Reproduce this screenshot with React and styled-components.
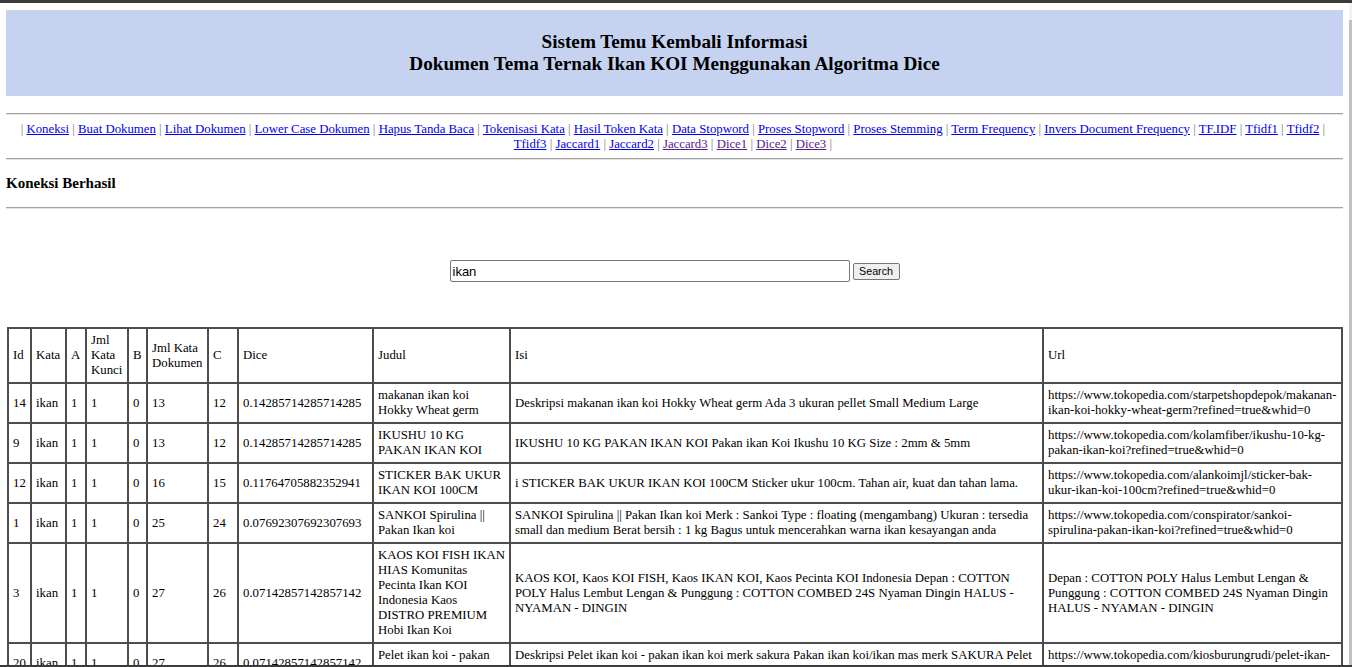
import React, { useState } from 'react';
import styled, { createGlobalStyle } from 'styled-components';

const GlobalStyle = createGlobalStyle`
    html,
    body {
        margin: 0;
        padding: 0;
        background: #ffffff;
    }
    body {
        font-family: 'Liberation Serif', 'Times New Roman', serif;
        font-size: 12.8px;
        color: #000000;
    }
`;

const menu = [
    { label: 'Koneksi' },
    { label: 'Buat Dokumen' },
    { label: 'Lihat Dokumen' },
    { label: 'Lower Case Dokumen' },
    { label: 'Hapus Tanda Baca' },
    { label: 'Tokenisasi Kata' },
    { label: 'Hasil Token Kata' },
    { label: 'Data Stopword' },
    { label: 'Proses Stopword' },
    { label: 'Proses Stemming' },
    { label: 'Term Frequency' },
    { label: 'Invers Document Frequency' },
    { label: 'TF.IDF' },
    { label: 'Tfidf1' },
    { label: 'Tfidf2', breakAfter: true },
    { label: 'Tfidf3' },
    { label: 'Jaccard1' },
    { label: 'Jaccard2' },
    { label: 'Jaccard3', visited: true },
    { label: 'Dice1', visited: true },
    { label: 'Dice2', visited: true },
    { label: 'Dice3', visited: true },
];

const headers = [
    'Id',
    'Kata',
    'A',
    'Jml Kata Kunci',
    'B',
    'Jml Kata Dokumen',
    'C',
    'Dice',
    'Judul',
    'Isi',
    'Url',
];

// column widths measured off the reference, border to border
const colWidths = [23, 35, 20, 42, 19, 61, 30, 135, 137, 533, 299];

const results = [
    {
        id: 14,
        kata: 'ikan',
        a: 1,
        jkk: 1,
        b: 0,
        jkd: 13,
        c: 12,
        dice: '0.14285714285714285',
        judul: 'makanan ikan koi Hokky Wheat germ',
        isi: 'Deskripsi makanan ikan koi Hokky Wheat germ Ada 3 ukuran pellet Small Medium Large',
        url: 'https://www.tokopedia.com/starpetshopdepok/makanan-ikan-koi-hokky-wheat-germ?refined=true&whid=0',
    },
    {
        id: 9,
        kata: 'ikan',
        a: 1,
        jkk: 1,
        b: 0,
        jkd: 13,
        c: 12,
        dice: '0.14285714285714285',
        judul: 'IKUSHU 10 KG PAKAN IKAN KOI',
        isi: 'IKUSHU 10 KG PAKAN IKAN KOI Pakan ikan Koi Ikushu 10 KG Size : 2mm & 5mm',
        url: 'https://www.tokopedia.com/kolamfiber/ikushu-10-kg-pakan-ikan-koi?refined=true&whid=0',
    },
    {
        id: 12,
        kata: 'ikan',
        a: 1,
        jkk: 1,
        b: 0,
        jkd: 16,
        c: 15,
        dice: '0.11764705882352941',
        judul: 'STICKER BAK UKUR IKAN KOI 100CM',
        isi: 'i STICKER BAK UKUR IKAN KOI 100CM Sticker ukur 100cm. Tahan air, kuat dan tahan lama.',
        url: 'https://www.tokopedia.com/alankoimjl/sticker-bak-ukur-ikan-koi-100cm?refined=true&whid=0',
    },
    {
        id: 1,
        kata: 'ikan',
        a: 1,
        jkk: 1,
        b: 0,
        jkd: 25,
        c: 24,
        dice: '0.07692307692307693',
        judul: 'SANKOI Spirulina || Pakan Ikan koi',
        isi: 'SANKOI Spirulina || Pakan Ikan koi Merk : Sankoi Type : floating (mengambang) Ukuran : tersedia small dan medium Berat bersih : 1 kg Bagus untuk mencerahkan warna ikan kesayangan anda',
        url: 'https://www.tokopedia.com/conspirator/sankoi-spirulina-pakan-ikan-koi?refined=true&whid=0',
    },
    {
        id: 3,
        kata: 'ikan',
        a: 1,
        jkk: 1,
        b: 0,
        jkd: 27,
        c: 26,
        dice: '0.07142857142857142',
        judul: 'KAOS KOI FISH IKAN HIAS Komunitas Pecinta Ikan KOI Indonesia Kaos DISTRO PREMIUM Hobi Ikan Koi',
        isi: 'KAOS KOI, Kaos KOI FISH, Kaos IKAN KOI, Kaos Pecinta KOI Indonesia Depan : COTTON POLY Halus Lembut Lengan & Punggung : COTTON COMBED 24S Nyaman Dingin HALUS - NYAMAN - DINGIN',
        url: 'Depan : COTTON POLY Halus Lembut Lengan & Punggung : COTTON COMBED 24S Nyaman Dingin HALUS - NYAMAN - DINGIN',
    },
    {
        id: 20,
        kata: 'ikan',
        a: 1,
        jkk: 1,
        b: 0,
        jkd: 27,
        c: 26,
        dice: '0.07142857142857142',
        judul: 'Pelet ikan koi - pakan ikan koi',
        isi: 'Deskripsi Pelet ikan koi - pakan ikan koi merk sakura Pakan ikan koi/ikan mas merk SAKURA Pelet apung isi 1 kg',
        url: 'https://www.tokopedia.com/kiosburungrudi/pelet-ikan-koi-pakan-ikan-koi?refined=true&whid=0',
    },
];

function App() {
    const [keyword, setKeyword] = useState('ikan');

    return (
        <>
            <GlobalStyle />
            <Frame>
                <WindowEdge />
                <Viewport>
                    <Page>
                        <Banner>
                            <BannerTitle>
                                Sistem Temu Kembali Informasi
                                <br />
                                Dokumen Tema Ternak Ikan KOI Menggunakan Algoritma Dice
                            </BannerTitle>
                        </Banner>

                        <Rule $top={17} />
                        <Menu>
                            <Sep>| </Sep>
                            {menu.map((m) => (
                                <React.Fragment key={m.label}>
                                    <MenuLink href='#' $visited={m.visited}>
                                        {m.label}
                                    </MenuLink>
                                    <Sep> | </Sep>
                                    {m.breakAfter && <br />}
                                </React.Fragment>
                            ))}
                        </Menu>
                        <Rule $top={6} />

                        <Status>Koneksi Berhasil</Status>
                        <Rule $top={15} />

                        <SearchForm onSubmit={(e) => e.preventDefault()}>
                            <SearchInput
                                type='text'
                                value={keyword}
                                onChange={(e) => setKeyword(e.target.value)}
                            />
                            <SearchButton type='submit'>Search</SearchButton>
                        </SearchForm>

                        <ResultTable>
                            <colgroup>
                                {colWidths.map((w, i) => (
                                    <col key={i} style={{ width: w }} />
                                ))}
                            </colgroup>
                            <thead>
                                <tr>
                                    {headers.map((h) => (
                                        <HeadCell key={h}>{h}</HeadCell>
                                    ))}
                                </tr>
                            </thead>
                            <tbody>
                                {results.map((r) => (
                                    <tr key={r.id}>
                                        <Cell>{r.id}</Cell>
                                        <Cell>{r.kata}</Cell>
                                        <Cell>{r.a}</Cell>
                                        <Cell>{r.jkk}</Cell>
                                        <Cell>{r.b}</Cell>
                                        <Cell>{r.jkd}</Cell>
                                        <Cell>{r.c}</Cell>
                                        <Cell>{r.dice}</Cell>
                                        <Cell>{r.judul}</Cell>
                                        <Cell>{r.isi}</Cell>
                                        <Cell>{r.url}</Cell>
                                    </tr>
                                ))}
                            </tbody>
                        </ResultTable>
                    </Page>
                    <ScrollTrack>
                        <ScrollThumb />
                    </ScrollTrack>
                </Viewport>
                <WindowEdge $bottom />
            </Frame>
        </>
    );
}

export default App;

const Frame = styled.div`
    height: 100vh;
    display: flex;
    flex-direction: column;
    overflow: hidden;
    background: #ffffff;
`;

const WindowEdge = styled.div`
    flex: 0 0 ${(props) => (props.$bottom ? '2px' : '3px')};
    background: #3b3b3b;
`;

const Viewport = styled.div`
    flex: 1;
    min-height: 0;
    display: flex;
`;

const Page = styled.div`
    flex: 1;
    min-width: 0;
    overflow: hidden;
    padding: 7px 6px 0;
`;

const ScrollTrack = styled.div`
    flex: 0 0 3px;
    display: flex;
    flex-direction: column;
    background: #f1f1f1;
`;

const ScrollThumb = styled.div`
    flex: 1;
    margin-top: 17px;
    background: #c1c1c1;
`;

const Banner = styled.div`
    background: #c5d2f0;
    padding: 21px 0;
    text-align: center;
`;

const BannerTitle = styled.h2`
    margin: 0;
    font-size: 19.2px;
    line-height: 22px;
    font-weight: bold;
`;

const Rule = styled.hr`
    margin: ${(props) => props.$top}px 0 0;
    height: 0;
    border: 0;
    border-top: 1px solid #a3a3a3;
    border-bottom: 1px solid #e4e4e4;
`;

const Menu = styled.div`
    margin-top: 7px;
    text-align: center;
    line-height: 15px;
    font-size: 12.8px;
`;

const MenuLink = styled.a`
    color: ${(props) => (props.$visited ? '#551a8b' : '#0000ee')};
    text-decoration: underline;
`;

const Sep = styled.span`
    color: #777777;
    white-space: pre;
`;

const Status = styled.h3`
    margin: 15px 0 0;
    font-size: 15px;
    line-height: 17px;
    font-weight: bold;
`;

const SearchForm = styled.form`
    margin-top: 51px;
    display: flex;
    justify-content: center;
    align-items: center;
    gap: 3px;
`;

const SearchInput = styled.input`
    box-sizing: border-box;
    width: 400px;
    height: 22px;
    padding: 1px 2px;
    border: 1px solid #767676;
    border-radius: 2px;
    font-family: 'Liberation Sans', Arial, sans-serif;
    font-size: 13px;
    color: #000000;
    outline: none;
`;

const SearchButton = styled.button`
    box-sizing: border-box;
    width: 47px;
    height: 17px;
    padding: 0;
    border: 1px solid #767676;
    border-radius: 2px;
    background: #efefef;
    font-family: 'Liberation Sans', Arial, sans-serif;
    font-size: 10.7px;
    color: #000000;
`;

const ResultTable = styled.table`
    margin: 45px 1px 0;
    width: 1335px;
    table-layout: fixed;
    border-collapse: separate;
    border-spacing: 0;
    border: 1px solid #4d4d4d;
    font-size: 12.8px;
`;

const HeadCell = styled.th`
    padding: 4px;
    border: 1px solid #4d4d4d;
    font-weight: normal;
    text-align: left;
    vertical-align: middle;
`;

const Cell = styled.td`
    padding: 4px;
    border: 1px solid #4d4d4d;
    text-align: left;
    vertical-align: middle;
`;
